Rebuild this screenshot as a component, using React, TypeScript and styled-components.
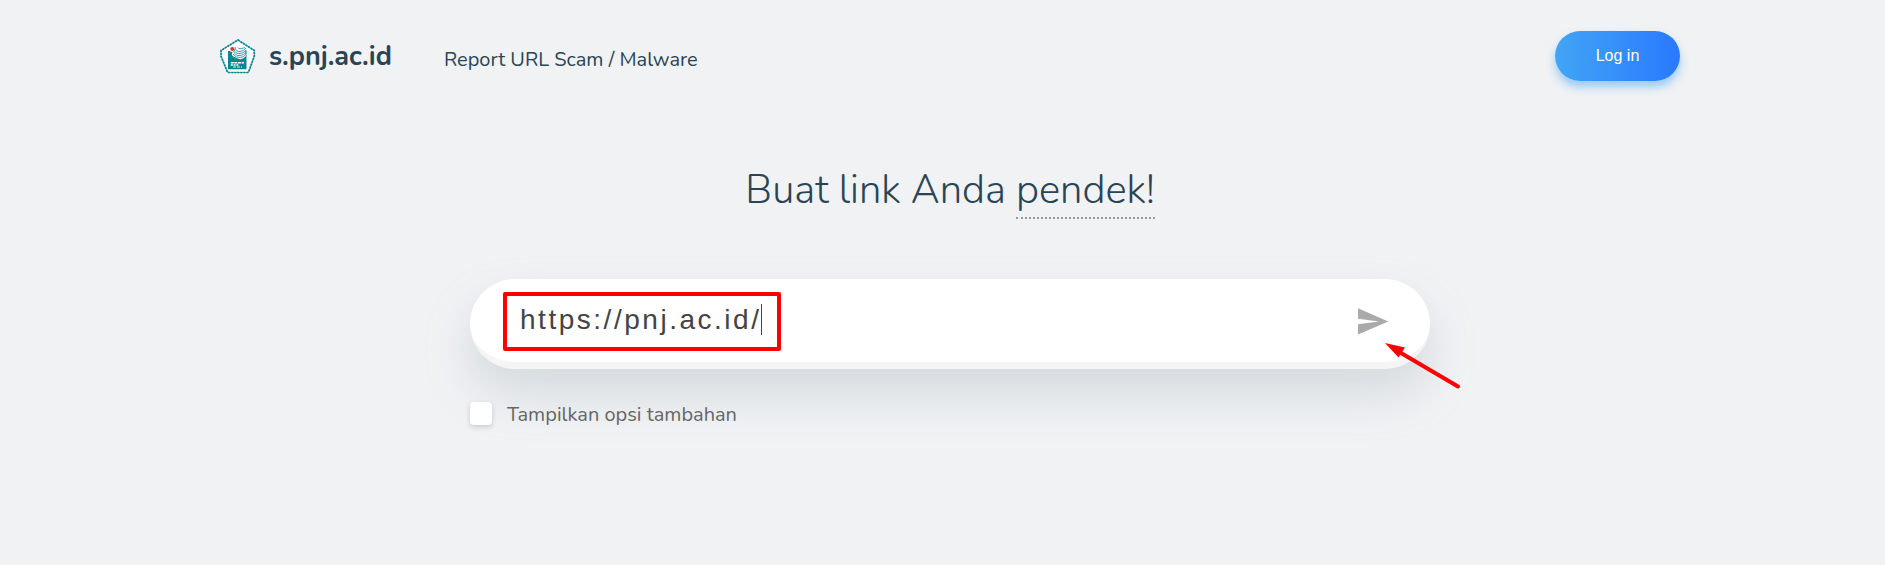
import React from "react";
import styled, { createGlobalStyle } from "styled-components";

const Global = createGlobalStyle`
  * { box-sizing: border-box; }
  body { margin: 0; background: #f0f2f4; color: #2b4454; font-family: Nunito, Lato, "Open Sans", sans-serif; }
`;

const Page = styled.div`
  min-height: 100vh;
  padding-left: 15px;
  overflow: hidden;
`;

const Header = styled.header`
  max-width: 1460px;
  margin: 0 auto;
  height: 112px;
  display: flex;
  align-items: center;
  justify-content: space-between;
`;

const Nav = styled.nav`
  display: flex;
  align-items: center;
  gap: 52px;
`;

const Brand = styled.a`
  display: flex;
  align-items: center;
  gap: 13px;
  color: inherit;
  text-decoration: none;
  font-size: 27px;
  font-weight: 700;
  line-height: 36px;
`;

const BrandName = styled.span`
  padding-top: 2px;
`;

const NavLink = styled.a`
  color: inherit;
  text-decoration: none;
  font-size: 20px;
  line-height: 28px;
  padding-top: 8px;
`;

const LoginButton = styled.button`
  width: 125px;
  height: 50px;
  border: 0;
  border-radius: 25px;
  color: #fff;
  background: linear-gradient(to right, #42a5f5, #2979ff);
  box-shadow: 0 6px 8px rgba(66, 165, 245, 0.5);
  font: 16px/20px "Liberation Sans", Arial, sans-serif;
  cursor: pointer;
`;

const Main = styled.main`
  max-width: 960px;
  margin: 0 auto;
  display: flex;
  flex-direction: column;
`;

const Title = styled.h1`
  margin: 50px 0 61px;
  text-align: center;
  font-size: 40px;
  font-weight: 300;
  line-height: 56px;
`;

const Underlined = styled.span`
  border-bottom: 2px dotted #999;
`;

const Form = styled.form`
  display: flex;
  flex-direction: column;
  gap: 33px;
`;

const Field = styled.div`
  position: relative;
  display: flex;
`;

const UrlInput = styled.input`
  flex: 1;
  min-width: 0;
  height: 90px;
  padding: 0 105px 2px 50px;
  border: 0;
  border-bottom: 7px solid #f5f5f5;
  border-radius: 45px;
  outline: none;
  background: #fff;
  box-shadow: 0 25px 44px hsla(200, 15%, 70%, 0.38);
  color: #444;
  font: 28px "Liberation Sans", Arial, sans-serif;
  letter-spacing: 0.09em;
`;

const SendButton = styled.button`
  position: absolute;
  top: 22px;
  right: 37px;
  width: 40px;
  height: 40px;
  padding: 0;
  border: 0;
  background: none;
  display: grid;
  place-items: center;
  color: #aaa;
  cursor: pointer;
`;

const Caret = styled.span`
  position: absolute;
  left: 291px;
  top: 25px;
  width: 1px;
  height: 31px;
  background: #444;
`;

const Highlight = styled.div`
  position: absolute;
  left: 33px;
  top: 13px;
  width: 278px;
  height: 59px;
  border: 4px solid #f00;
  border-radius: 2px;
  pointer-events: none;
`;

const Pointer = styled.svg`
  position: absolute;
  z-index: 1;
  right: -34px;
  top: 63px;
  pointer-events: none;
`;

const Option = styled.label`
  position: relative;
  display: flex;
  align-items: flex-start;
  gap: 15px;
  align-self: flex-start;
  color: #666;
  font-size: 20px;
  line-height: 26px;
  cursor: pointer;
`;

const Checkbox = styled.input`
  appearance: none;
  width: 22px;
  height: 23px;
  margin: 0;
  border-radius: 4px;
  background: #fff;
  box-shadow: 0 2px 5px rgba(50, 50, 50, 0.2);
`;

const Logo = () => (
  <svg width="36" height="36" viewBox="0 0 36 36" fill="none" aria-hidden="true">
    <path d="M18 2 L34.3 12.5 V18 L29 33 Q28.5 34.5 27 34.5 H9 Q7.5 34.5 7 33 L1 18 V12.5 Z" fill="#fff" stroke="#5fb0b8" strokeWidth="1.2" />
    <path d="M18 2 L34.3 12.5 V18 L29 33 Q28.5 34.5 27 34.5 H9 Q7.5 34.5 7 33 L1 18 V12.5 Z" stroke="#068792" strokeWidth="1.7" strokeDasharray="2 1" />
    <path d="M8 13 H14 L18 17 L26.5 12 V31.3 H8 Z" fill="#068792" />
    <circle cx="12.3" cy="11" r="3" fill="#fff" />
    <path d="M14 8.7 L25 12 L26 18 Q22 23 16.5 20 Q11 18 12 15.5 Z" fill="#fff" />
    <g stroke="#068792" strokeWidth="0.8">
      <path d="M15 9 Q15.5 14 20 13.5 Q24 13 26 10" />
      <path d="M14 11 Q15 16 20 15.5 Q24 15 26 12.5" />
      <path d="M13.5 13.5 Q15.5 18 20 17.5 Q24 17 26 14.5" />
      <path d="M13 16 Q16 20 20 19.5 Q24 19 26 16.5" />
      <path d="M18 9.5 Q19 12 25 9.5" />
    </g>
    <circle cx="12.3" cy="11" r="2" fill="#e5322d" />
    <g stroke="#fff" strokeWidth="1.5">
      <path d="M10.8 24.8 H24" strokeDasharray="3 0.6" />
      <path d="M10.8 27 H19" strokeDasharray="2 0.8" />
      <path d="M13 29 H22" strokeWidth="0.9" strokeDasharray="3 1" />
    </g>
  </svg>
);

export default function App() {
  return (
    <Page>
      <Global />
      <Header>
        <Nav>
          <Brand href="#"><Logo /><BrandName>s.pnj.ac.id</BrandName></Brand>
          <NavLink href="#report">Report URL Scam / Malware</NavLink>
        </Nav>
        <LoginButton type="button">Log in</LoginButton>
      </Header>
      <Main>
        <Title>Buat link Anda <Underlined>pendek!</Underlined></Title>
        <Form onSubmit={(e) => e.preventDefault()}>
          <Field>
            <UrlInput type="text" aria-label="URL" defaultValue="https://pnj.ac.id/" />
            <Caret />
            <SendButton type="submit" aria-label="Kirim">
              <svg width="32" height="28" viewBox="0 0 32 28" fill="currentColor">
                <path d="M1 1.3 L31.3 14.5 L1 27.5 V17.3 L22 14.5 L1 11.7 Z" />
              </svg>
            </SendButton>
            <Highlight />
            <Pointer width="80" height="50" viewBox="0 0 80 50" aria-hidden="true">
              <path d="M17 11 L74 44.5" stroke="#f00" strokeWidth="4" strokeLinecap="round" />
              <path d="M1 1 L21 5.5 L14.5 15.5 Z" fill="#f00" />
            </Pointer>
          </Field>
          <Option><Checkbox type="checkbox" />Tampilkan opsi tambahan</Option>
        </Form>
      </Main>
    </Page>
  );
}
